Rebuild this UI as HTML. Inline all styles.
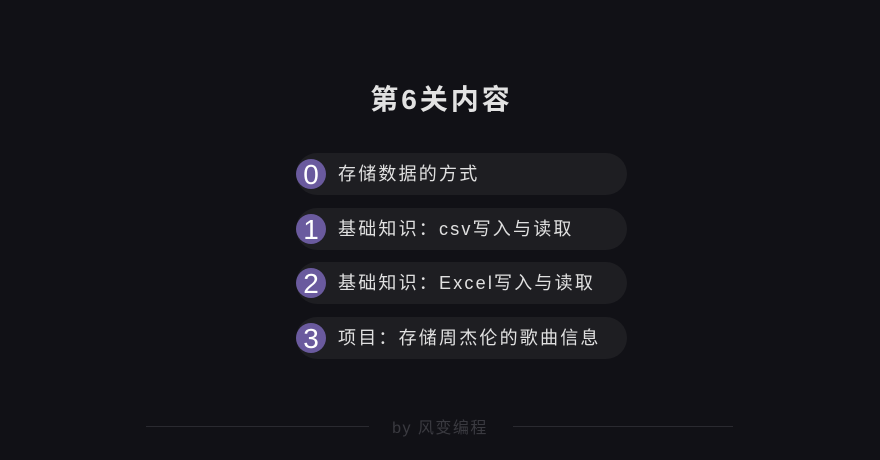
<!DOCTYPE html>
<html><head><meta charset="utf-8"><style>
body{margin:0;width:880px;height:460px;background:#111116;font-family:"Liberation Sans","Noto Sans CJK SC",sans-serif;position:relative;overflow:hidden}
.t{position:absolute;top:78px;left:0;width:880px;text-align:center;color:#e2e2e2;font-size:28px;font-weight:bold;letter-spacing:3px;text-indent:3px}
.p{position:absolute;left:296px;width:331px;height:42px;border-radius:21px;background:#1e1e22}
.c{position:absolute;left:0;top:6px;width:30px;height:30px;border-radius:50%;background:#6a5a9e;color:#fff;font-size:28px;line-height:31px;text-align:center}
.x{position:absolute;left:42px;top:0;line-height:42px;color:#e0e0e0;font-size:18px;letter-spacing:2.2px}
.l{position:absolute;top:426px;height:1px;background:#2a2a30}
.f{position:absolute;top:414px;left:0;width:880px;text-align:center;color:#3a3a40;font-size:16px;letter-spacing:1.5px}
</style></head><body>
<div class="t">第6关内容</div>
<div class="p" style="top:153px"><div class="c">0</div><div class="x">存储数据的方式</div></div>
<div class="p" style="top:208px"><div class="c">1</div><div class="x">基础知识：csv写入与读取</div></div>
<div class="p" style="top:262px"><div class="c">2</div><div class="x">基础知识：Excel写入与读取</div></div>
<div class="p" style="top:317px"><div class="c">3</div><div class="x">项目：存储周杰伦的歌曲信息</div></div>
<div class="l" style="left:146px;width:223px"></div>
<div class="l" style="left:513px;width:220px"></div>
<div class="f">by 风变编程</div>
</body></html>
